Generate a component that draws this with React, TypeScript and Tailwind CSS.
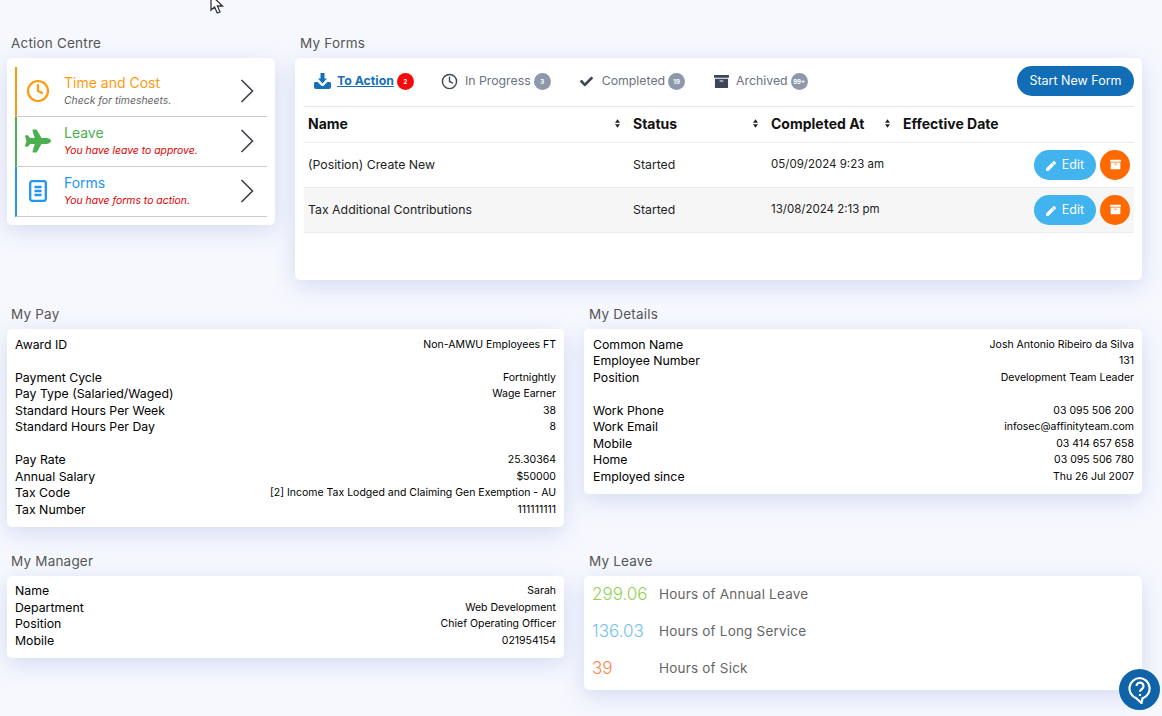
import React from "react";
import { FaPlane, FaCheck, FaArchive, FaPen } from "react-icons/fa";
import { FiClock } from "react-icons/fi";

const font = "font-['Inter','Liberation_Sans',sans-serif]";
const cardShadow = "shadow-[0_6px_22px_rgba(110,130,200,0.24)]";

function Title({ children, right }: { children: React.ReactNode; right?: boolean }) {
  return <h2 className={`h-5 mb-[5px] ${right ? "pl-[5px]" : "pl-1"} text-[13.5px] leading-5 text-[#555] font-normal tracking-[0.2px]`}>{children}</h2>;
}

function Card({ children, className = "" }: { children: React.ReactNode; className?: string }) {
  return <div className={`bg-white rounded-[5px] ${cardShadow} ${className}`}>{children}</div>;
}

function Rows({ rows, right }: { rows: ([string, string] | null)[]; right?: boolean }) {
  return (
    <Card className={`pt-[7.5px] pb-[8.5px] pr-2 ${right ? "pl-[9px]" : "pl-2"}`}>
      {rows.map((r, i) =>
        r ? (
          <div key={i} className="flex justify-between items-center h-[16.5px] text-black">
            <span className="text-[12.3px]">{r[0]}</span>
            <span className="text-[10.5px]">{r[1]}</span>
          </div>
        ) : (
          <div key={i} className="h-[16.5px]" />
        )
      )}
    </Card>
  );
}

function ActionItem({ color, border, icon, title, sub, subColor }: { color: string; border: string; icon: React.ReactNode; title: string; sub: string; subColor: string }) {
  return (
    <div className={`flex items-center h-[50px] pb-[2px] border-l-2 border-b border-b-[#ccc] ${border}`}>
      <div className="w-[44px] pr-[2px] flex justify-center shrink-0">{icon}</div>
      <div className="flex-1 min-w-0 pl-[3px] pt-[2px]">
        <div className={`text-[14px] leading-[18px] ${color}`}>{title}</div>
        <div className={`text-[10.4px] leading-[18px] italic ${subColor}`}>{sub}</div>
      </div>
      <svg viewBox="0 0 14 24" className="w-[14px] h-[24px] mr-[13px] fill-none stroke-[#3a3f4a] stroke-[1.6]">
        <path d="M1.5 1 12.5 12 1.5 23" />
      </svg>
    </div>
  );
}

function Tab({ icon, label, badge, active }: { icon: React.ReactNode; label: string; badge: string; active?: boolean }) {
  return (
    <div className="flex items-center">
      <span className="w-[18px] flex justify-center mr-[6px]">{icon}</span>
      <span className={active ? "text-[12.3px] font-bold text-[#1670b8] underline" : "text-[12.3px] text-[#6b7280]"}>{label}</span>
      <span className={`ml-[3px] w-[17px] h-[17px] rounded-full flex items-center justify-center text-[6px] font-bold text-white ${active ? "bg-[#f50a0a]" : "bg-[#8d99ab]"}`}>{badge}</span>
    </div>
  );
}

function Sort() {
  return (
    <svg viewBox="0 0 6 10" className="w-[5px] h-[9px] fill-[#222]">
      <path d="M3 0 6 4H0Z M3 10 0 6H6Z" />
    </svg>
  );
}

function FormRow({ name, date, alt }: { name: string; date: string; alt?: boolean }) {
  return (
    <tr className={`h-[45px] border-b border-[#e9ebf0] text-[12.3px] text-[#222] ${alt ? "bg-[#f6f6f7]" : ""}`}>
      <td className="pl-1 pt-[1px]">{name}</td>
      <td className="pl-1 pt-[1px]">Started</td>
      <td className="pl-1 pt-[1px] text-[11.5px]">{date}</td>
      <td />
      <td className="pr-1">
        <div className="flex justify-end items-center gap-[4px]">
          <button className="h-[30px] w-[62px] pt-[2px] rounded-full bg-[#41b3ee] text-white text-[12.5px] flex items-center justify-center gap-[6px]">
            <FaPen className="w-[10px] h-[10px]" />
            Edit
          </button>
          <button className="w-[30px] h-[30px] rounded-full bg-[#ff6a00] text-white flex items-center justify-center">
            <FaArchive className="w-[11px] h-[11px]" />
          </button>
        </div>
      </td>
    </tr>
  );
}

function Th({ label, sort }: { label: string; sort?: boolean }) {
  return (
    <th className="pl-1 pb-[2px] text-left font-bold text-[14px] text-[#111]">
      <div className="flex items-center justify-between pr-[9px]">
        <span>{label}</span>
        {sort && <Sort />}
      </div>
    </th>
  );
}

function Leave({ value, color, label }: { value: string; color: string; label: string }) {
  return (
    <div className="flex items-center h-[37px]">
      <span className={`w-[67px] pt-[2px] text-[17px] font-light ${color}`}>{value}</span>
      <span className="text-[13.5px] text-[#666] tracking-[0.2px]">{label}</span>
    </div>
  );
}

export default function App() {
  return (
    <div className={`${font} relative w-[1162px] h-[716px] overflow-hidden bg-[#f6f8fe] pl-[7px] pr-5 pt-[33px]`}>
      <svg viewBox="0 0 16 14" className="absolute left-[210px] top-0 w-4 h-[14px] fill-white stroke-[#333] stroke-[1.3]">
        <path d="M1 -5 1 10 4.6 7 7.2 13 10 11.8 7.4 6 12.5 6Z" />
      </svg>

      <div className="flex gap-5 items-start">
        <section className="w-[268px] shrink-0">
          <Title>Action Centre</Title>
          <Card className="px-2 pt-[9px] pb-2 h-[167px]">
            <ActionItem
              color="text-[#ff9a0d]"
              border="border-l-[#ff9a0d]"
              icon={<FiClock className="w-[24px] h-[24px] text-[#ff9a0d] stroke-[2.2]" />}
              title="Time and Cost"
              sub="Check for timesheets."
              subColor="text-[#666]"
            />
            <ActionItem
              color="text-[#4caf50]"
              border="border-l-[#4caf50]"
              icon={<FaPlane className="w-[26px] h-[26px] text-[#4caf50]" />}
              title="Leave"
              sub="You have leave to approve."
              subColor="text-[#e00000]"
            />
            <ActionItem
              color="text-[#2196f3]"
              border="border-l-[#2196f3]"
              icon={
                <svg viewBox="0 0 18 22" className="w-[18px] h-[22px] fill-none stroke-[#2196f3] stroke-[2.3]">
                  <rect x="1.2" y="1.2" width="15.6" height="19.6" rx="2" />
                  <path d="M5.5 7h7M5.5 11h7M5.5 15h7" />
                </svg>
              }
              title="Forms"
              sub="You have forms to action."
              subColor="text-[#e00000]"
            />
          </Card>
        </section>

        <section className="flex-1 min-w-0">
          <Title right>My Forms</Title>
          <Card className="pl-[9px] pr-2 pt-2 h-[222px]">
            <div className="flex items-start justify-between h-[41px] border-b border-[#e6e8ee] pl-[9px]">
              <div className="flex items-center gap-[27px] h-[30px]">
                <Tab
                  active
                  icon={
                    <svg viewBox="0 0 17 16" className="w-[17px] h-4 fill-[#1670b8]">
                      <path d="M6.5 0h4v5.5H13L8.5 10.5 4 5.5h2.5Z" />
                      <path d="M0 10.5C0 9.7.6 9 1.4 9h2.2l3.5 3.5c.8.8 2 .8 2.8 0L13.4 9h2.2c.8 0 1.4.7 1.4 1.5V14c0 1.1-.9 2-2 2H2c-1.1 0-2-.9-2-2Z" />
                    </svg>
                  }
                  label="To Action"
                  badge="2"
                />
                <Tab icon={<FiClock className="w-[17px] h-[17px] text-[#3e4658]" />} label="In Progress" badge="3" />
                <Tab icon={<FaCheck className="w-[13px] h-[13px] text-[#3e4658]" />} label="Completed" badge="19" />
                <Tab icon={<FaArchive className="w-[15px] h-[15px] text-[#3e4658]" />} label="Archived" badge="99+" />
              </div>
              <button className="h-[30px] w-[117px] rounded-full bg-[#116db5] text-white text-[12.5px]">Start New Form</button>
            </div>
            <table className="w-full table-fixed border-collapse">
              <colgroup>
                <col className="w-[325px]" />
                <col className="w-[138px]" />
                <col className="w-[132px]" />
                <col className="w-[130px]" />
                <col />
              </colgroup>
              <thead>
                <tr className="h-[35px] border-b border-[#e9ebf0]">
                  <Th label="Name" sort />
                  <Th label="Status" sort />
                  <Th label="Completed At" sort />
                  <Th label="Effective Date" />
                  <th />
                </tr>
              </thead>
              <tbody>
                <FormRow name="(Position) Create New" date="05/09/2024 9:23 am" />
                <FormRow alt name="Tax Additional Contributions" date="13/08/2024 2:13 pm" />
              </tbody>
            </table>
          </Card>
        </section>
      </div>

      <div className="flex gap-5 items-start mt-6">
        <section className="w-[557px] shrink-0">
          <Title>My Pay</Title>
          <Rows
            rows={[
              ["Award ID", "Non-AMWU Employees FT"],
              null,
              ["Payment Cycle", "Fortnightly"],
              ["Pay Type (Salaried/Waged)", "Wage Earner"],
              ["Standard Hours Per Week", "38"],
              ["Standard Hours Per Day", "8"],
              null,
              ["Pay Rate", "25.30364"],
              ["Annual Salary", "$50000"],
              ["Tax Code", "[2] Income Tax Lodged and Claiming Gen Exemption - AU"],
              ["Tax Number", "111111111"],
            ]}
          />
          <div className="mt-6">
            <Title>My Manager</Title>
            <Rows
              rows={[
                ["Name", "Sarah"],
                ["Department", "Web Development"],
                ["Position", "Chief Operating Officer"],
                ["Mobile", "021954154"],
              ]}
            />
          </div>
        </section>

        <section className="flex-1 min-w-0">
          <Title right>My Details</Title>
          <Rows
            right
            rows={[
              ["Common Name", "Josh Antonio Ribeiro da Silva"],
              ["Employee Number", "131"],
              ["Position", "Development Team Leader"],
              null,
              ["Work Phone", "03 095 506 200"],
              ["Work Email", "infosec@affinityteam.com"],
              ["Mobile", "03 414 657 658"],
              ["Home", "03 095 506 780"],
              ["Employed since", "Thu 26 Jul 2007"],
            ]}
          />
          <div className="mt-[57px]">
            <Title right>My Leave</Title>
            <Card className="px-2 pb-[3px]">
              <Leave value="299.06" color="text-[#8fd14f]" label="Hours of Annual Leave" />
              <Leave value="136.03" color="text-[#6fc3ee]" label="Hours of Long Service" />
              <Leave value="39" color="text-[#f5854a]" label="Hours of Sick" />
            </Card>
          </div>
        </section>
      </div>

      <button className="absolute left-[1119px] top-[669px] w-[41px] h-[41px] rounded-full bg-[#0f63a8] flex items-center justify-center">
        <svg viewBox="0 0 24 28" className="w-[24px] h-[28px] fill-none stroke-white stroke-[2.2]">
          <path d="M12 2a10.5 10.5 0 0 0-3.5 20.4L13.5 27l1-4.6A10.5 10.5 0 0 0 12 2Z" />
          <path d="M8.5 10a3.5 3.5 0 1 1 5.4 3c-1.2.8-1.9 1.4-1.9 2.8" />
          <path d="M12 18v2" />
        </svg>
      </button>
    </div>
  );
}
